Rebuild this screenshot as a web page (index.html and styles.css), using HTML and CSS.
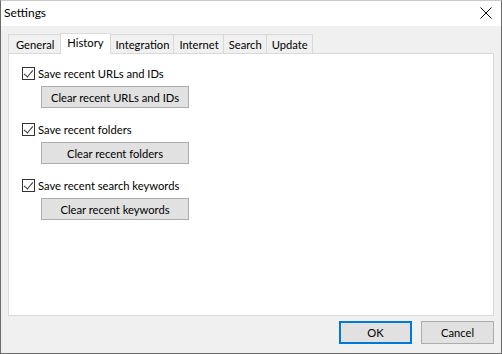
FILE: index.html
```html
<!DOCTYPE html>
<html lang="en">
<head>
    <meta charset="UTF-8">
    <title>Settings</title>
    <link rel="stylesheet" href="styles.css">
</head>
<body>
<div class="window">
    <div class="titlebar">
        <span class="title">Settings</span>
        <svg class="close" width="12" height="12" viewBox="0 0 12 12">
            <path d="M0.5 0.5 L11.5 11.5 M11.5 0.5 L0.5 11.5" stroke="#000" stroke-width="1" fill="none"/>
        </svg>
    </div>

    <div class="body">
        <div class="tabs">
            <div class="tab">General</div>
            <div class="tab active">History</div>
            <div class="tab">Integration</div>
            <div class="tab">Internet</div>
            <div class="tab">Search</div>
            <div class="tab">Update</div>
        </div>

        <div class="panel">
            <div class="group">
                <label class="check"><span class="box checked"></span>Save recent URLs and IDs</label>
                <button class="btn wide">Clear recent URLs and IDs</button>
            </div>
            <div class="group">
                <label class="check"><span class="box checked"></span>Save recent folders</label>
                <button class="btn wide">Clear recent folders</button>
            </div>
            <div class="group">
                <label class="check"><span class="box checked"></span>Save recent search keywords</label>
                <button class="btn wide">Clear recent keywords</button>
            </div>
        </div>

        <div class="footer">
            <button class="btn default">OK</button>
            <button class="btn">Cancel</button>
        </div>
    </div>
</div>
</body>
</html>
```

FILE: styles.css
```css
html, body {
    margin: 0;
    padding: 0;
}
body {
    font-family: Lato, "Liberation Sans", sans-serif;
    font-size: 11.2px;
    color: #000;
    background: #fff;
}
.window {
    width: 502px;
    height: 354px;
    box-sizing: border-box;
    border: 1px solid #6b6b6b;
    border-top-color: #c8c8c8;
    display: flex;
    flex-direction: column;
}
.titlebar {
    height: 25px;
    background: #fff;
    display: flex;
    align-items: center;
    justify-content: space-between;
    padding: 0 9px 0 3px;
}
.title {
    font-size: 12px;
    margin-top: -2px;
}
.close {
    margin-top: -1px;
}
.body {
    flex: 1;
    background: #f0f0f0;
    padding: 7px 7px 0 7px;
    display: flex;
    flex-direction: column;
}
.tabs {
    display: flex;
    height: 20px;
    align-items: flex-end;
    padding-left: 1px;
}
.tab {
    height: 19px;
    box-sizing: border-box;
    border: 1px solid #d9d9d9;
    border-bottom: none;
    margin-left: -1px;
    padding: 0 4px 0 5px;
    line-height: 19px;
    background: #f0f0f0;
}
.tab:first-child {
    padding: 0 6px 0 7px;
}
.tab.active {
    height: 21px;
    margin-bottom: -1px;
    background: #fff;
    position: relative;
    z-index: 1;
    line-height: 17px;
    padding: 0 6px;
}
.panel {
    height: 263px;
    box-sizing: border-box;
    background: #fff;
    border: 1px solid #d9d9d9;
    padding: 11px 0 0 13px;
}
.group {
    margin-bottom: 13px;
}
.check {
    display: flex;
    align-items: center;
    height: 16px;
}
.box {
    width: 13px;
    height: 13px;
    box-sizing: border-box;
    border: 1px solid #333;
    margin-right: 3px;
    background: #fff;
    position: relative;
}
.box.checked::after {
    content: "";
    position: absolute;
    left: 3px;
    top: 0px;
    width: 4px;
    height: 8px;
    border: solid #333;
    border-width: 0 1px 1px 0;
    transform: rotate(40deg);
}
.btn {
    font-family: inherit;
    font-size: 11.2px;
    height: 22px;
    box-sizing: border-box;
    background: #e1e1e1;
    border: 1px solid #adadad;
    padding: 0;
    color: #000;
}
.btn.wide {
    display: block;
    width: 148px;
    margin: 5px 0 0 19px;
}
.footer {
    display: flex;
    justify-content: flex-end;
    gap: 9px;
    padding-top: 5px;
}
.footer .btn {
    width: 73px;
    height: 23px;
}
.btn.default {
    border: 2px solid #0078d7;
}
```
